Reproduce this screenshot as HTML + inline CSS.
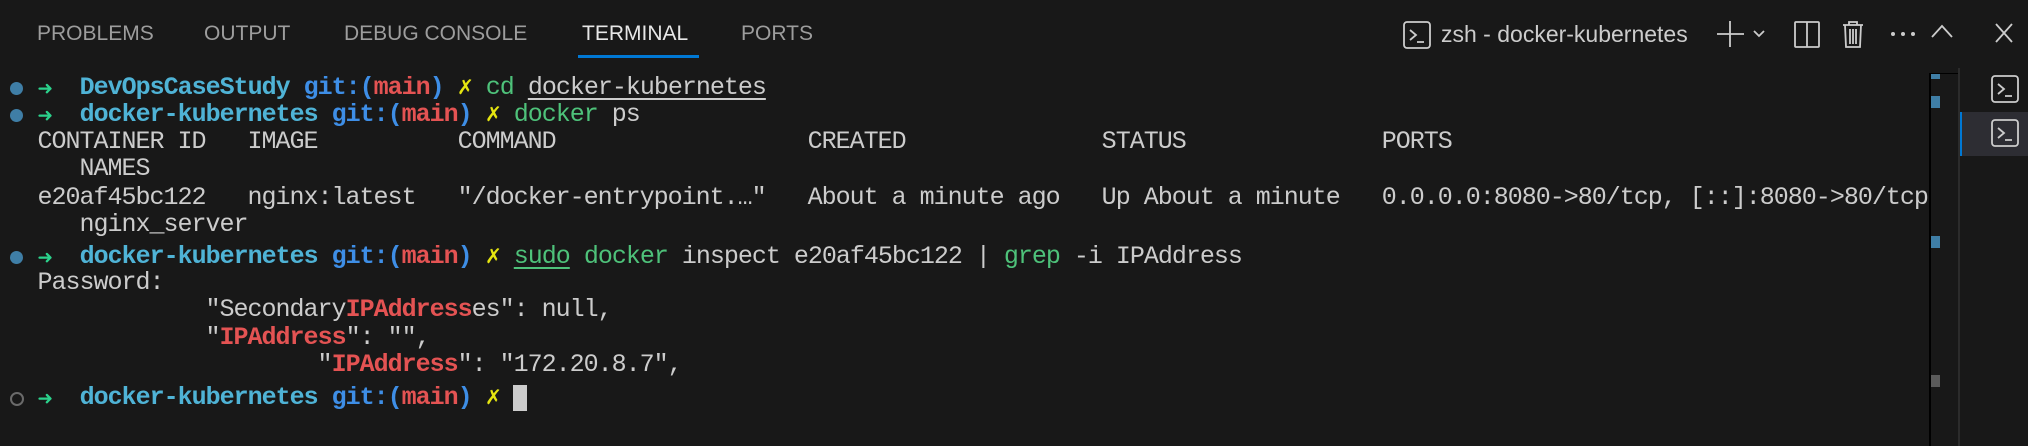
<!DOCTYPE html>
<html><head><meta charset="utf-8"><style>
html,body{margin:0;padding:0;background:#181818;width:2028px;height:446px;overflow:hidden;position:relative}
.tab{position:absolute;top:20px;font:21px "Liberation Sans",sans-serif;color:#9d9d9d;line-height:28px}
.t{position:absolute;left:37.5px;font:25px/27px "Liberation Mono",monospace;letter-spacing:-1px;color:#cccccc;white-space:pre}
.c{color:#4fb3d6;font-weight:bold}.g{color:#3e8ee6;font-weight:bold}.r{color:#e45353;font-weight:bold}.y{color:#e5e510}.a{color:#2bd18b;position:relative;top:3px}.gr{color:#4ec27a}
.u{text-decoration:underline;text-underline-offset:4px}
.dot{position:absolute;left:10px;width:13px;height:13px;border-radius:50%;background:#3f7ea6}
.mk{position:absolute;left:1931px;width:9px}
</style></head><body>
<div class="tab" style="left:37px">PROBLEMS</div>
<div class="tab" style="left:204px">OUTPUT</div>
<div class="tab" style="left:344px">DEBUG CONSOLE</div>
<div class="tab" style="left:582px;color:#e7e7e7">TERMINAL</div>
<div class="tab" style="left:741px">PORTS</div>
<div style="position:absolute;left:578px;top:55px;width:121px;height:3px;background:#0078d4"></div>

<svg style="position:absolute;left:1403px;top:21px" width="28" height="28" viewBox="0 0 28 28" fill="none" stroke="#cccccc" stroke-width="1.8"><rect x="1" y="1" width="26" height="26" rx="3"/><path d="M7 9l6 5-6 5M14 21h7"/></svg>
<div style="position:absolute;left:1441px;top:19px;font:23px/30px 'Liberation Sans',sans-serif;color:#cccccc">zsh - docker-kubernetes</div>
<svg style="position:absolute;left:1716px;top:20px" width="80" height="28" viewBox="0 0 80 28" fill="none" stroke="#cccccc" stroke-width="1.8"><path d="M14 1v26M1 14h27M38 11l5 5 5-5"/></svg>
<svg style="position:absolute;left:1794px;top:21px" width="26" height="27" viewBox="0 0 26 27" fill="none" stroke="#cccccc" stroke-width="1.8"><rect x="1" y="1" width="24" height="25" rx="1"/><path d="M13 1v25"/></svg>
<svg style="position:absolute;left:1842px;top:20px" width="22" height="28" viewBox="0 0 22 28" fill="none" stroke="#cccccc" stroke-width="1.8"><path d="M1 5h20M7 5V2h8v3M3 5l1 22h14l1-22M8 9v15M11 9v15M14 9v15"/></svg>
<svg style="position:absolute;left:1890px;top:31px" width="26" height="6"><circle cx="3" cy="3" r="2" fill="#ccc"/><circle cx="13" cy="3" r="2" fill="#ccc"/><circle cx="23" cy="3" r="2" fill="#ccc"/></svg>
<svg style="position:absolute;left:1931px;top:24px" width="22" height="14" fill="none" stroke="#cccccc" stroke-width="1.8"><path d="M1 13L11 2l10 11"/></svg>
<svg style="position:absolute;left:1995px;top:23px" width="18" height="20" fill="none" stroke="#cccccc" stroke-width="1.8"><path d="M1 1l16 18M17 1L1 19"/></svg>

<div style="position:absolute;left:1929px;top:74px;width:2px;height:372px;background:#000"></div>
<div style="position:absolute;left:1929px;top:73px;width:30px;height:1px;background:#000"></div>
<div class="mk" style="top:74px;height:5px;background:#3f7ea6"></div>
<div class="mk" style="top:96px;height:12px;background:#3f7ea6"></div>
<div class="mk" style="top:236px;height:12px;background:#3f7ea6"></div>
<div class="mk" style="top:375px;height:12px;background:#5a5a5a"></div>
<div style="position:absolute;left:1958px;top:68px;width:2px;height:378px;background:#2b2b2b"></div>
<div style="position:absolute;left:1960px;top:112px;width:68px;height:44px;background:#2d2d33;border-left:2px solid #0078d4;box-sizing:border-box"></div>
<svg style="position:absolute;left:1991px;top:75px" width="28" height="28" viewBox="0 0 28 28" fill="none" stroke="#cccccc" stroke-width="1.8"><rect x="1" y="1" width="26" height="26" rx="3"/><path d="M7 9l6 5-6 5M14 21h7"/></svg>
<svg style="position:absolute;left:1991px;top:119px" width="28" height="28" viewBox="0 0 28 28" fill="none" stroke="#cccccc" stroke-width="1.8"><rect x="1" y="1" width="26" height="26" rx="3"/><path d="M7 9l6 5-6 5M14 21h7"/></svg>

<div class="dot" style="top:82px"></div>
<div class="dot" style="top:109px"></div>
<div class="dot" style="top:251px"></div>
<div class="dot" style="top:392px;background:none;border:2px solid #6a6a6a;width:10px;height:10px"></div>

<div class="t" style="top:74px"><span class="a">➜</span>  <span class="c">DevOpsCaseStudy</span> <span class="g">git:(</span><span class="r">main</span><span class="g">)</span> <span class="y">✗</span> <span class="gr">cd</span> <span class="u">docker-kubernetes</span></div>
<div class="t" style="top:101px"><span class="a">➜</span>  <span class="c">docker-kubernetes</span> <span class="g">git:(</span><span class="r">main</span><span class="g">)</span> <span class="y">✗</span> <span class="gr">docker</span> ps</div>
<div class="t" style="top:128px">CONTAINER ID   IMAGE          COMMAND                  CREATED              STATUS              PORTS</div>
<div class="t" style="top:155px">   NAMES</div>
<div class="t" style="top:184px">e20af45bc122   nginx:latest   "/docker-entrypoint.…"   About a minute ago   Up About a minute   0.0.0.0:8080->80/tcp, [::]:8080->80/tcp</div>
<div class="t" style="top:211px">   nginx_server</div>
<div class="t" style="top:243px"><span class="a">➜</span>  <span class="c">docker-kubernetes</span> <span class="g">git:(</span><span class="r">main</span><span class="g">)</span> <span class="y">✗</span> <span class="gr u">sudo</span> <span class="gr">docker</span> inspect e20af45bc122 | <span class="gr">grep</span> -i IPAddress</div>
<div class="t" style="top:269px">Password:</div>
<div class="t" style="top:296px">            "Secondary<span class="r">IPAddress</span>es": null,</div>
<div class="t" style="top:324px">            "<span class="r">IPAddress</span>": "",</div>
<div class="t" style="top:351px">                    "<span class="r">IPAddress</span>": "172.20.8.7",</div>
<div class="t" style="top:384px"><span class="a">➜</span>  <span class="c">docker-kubernetes</span> <span class="g">git:(</span><span class="r">main</span><span class="g">)</span> <span class="y">✗</span> </div>
<div style="position:absolute;left:513px;top:385px;width:14px;height:26px;background:#cccccc"></div>
</body></html>
